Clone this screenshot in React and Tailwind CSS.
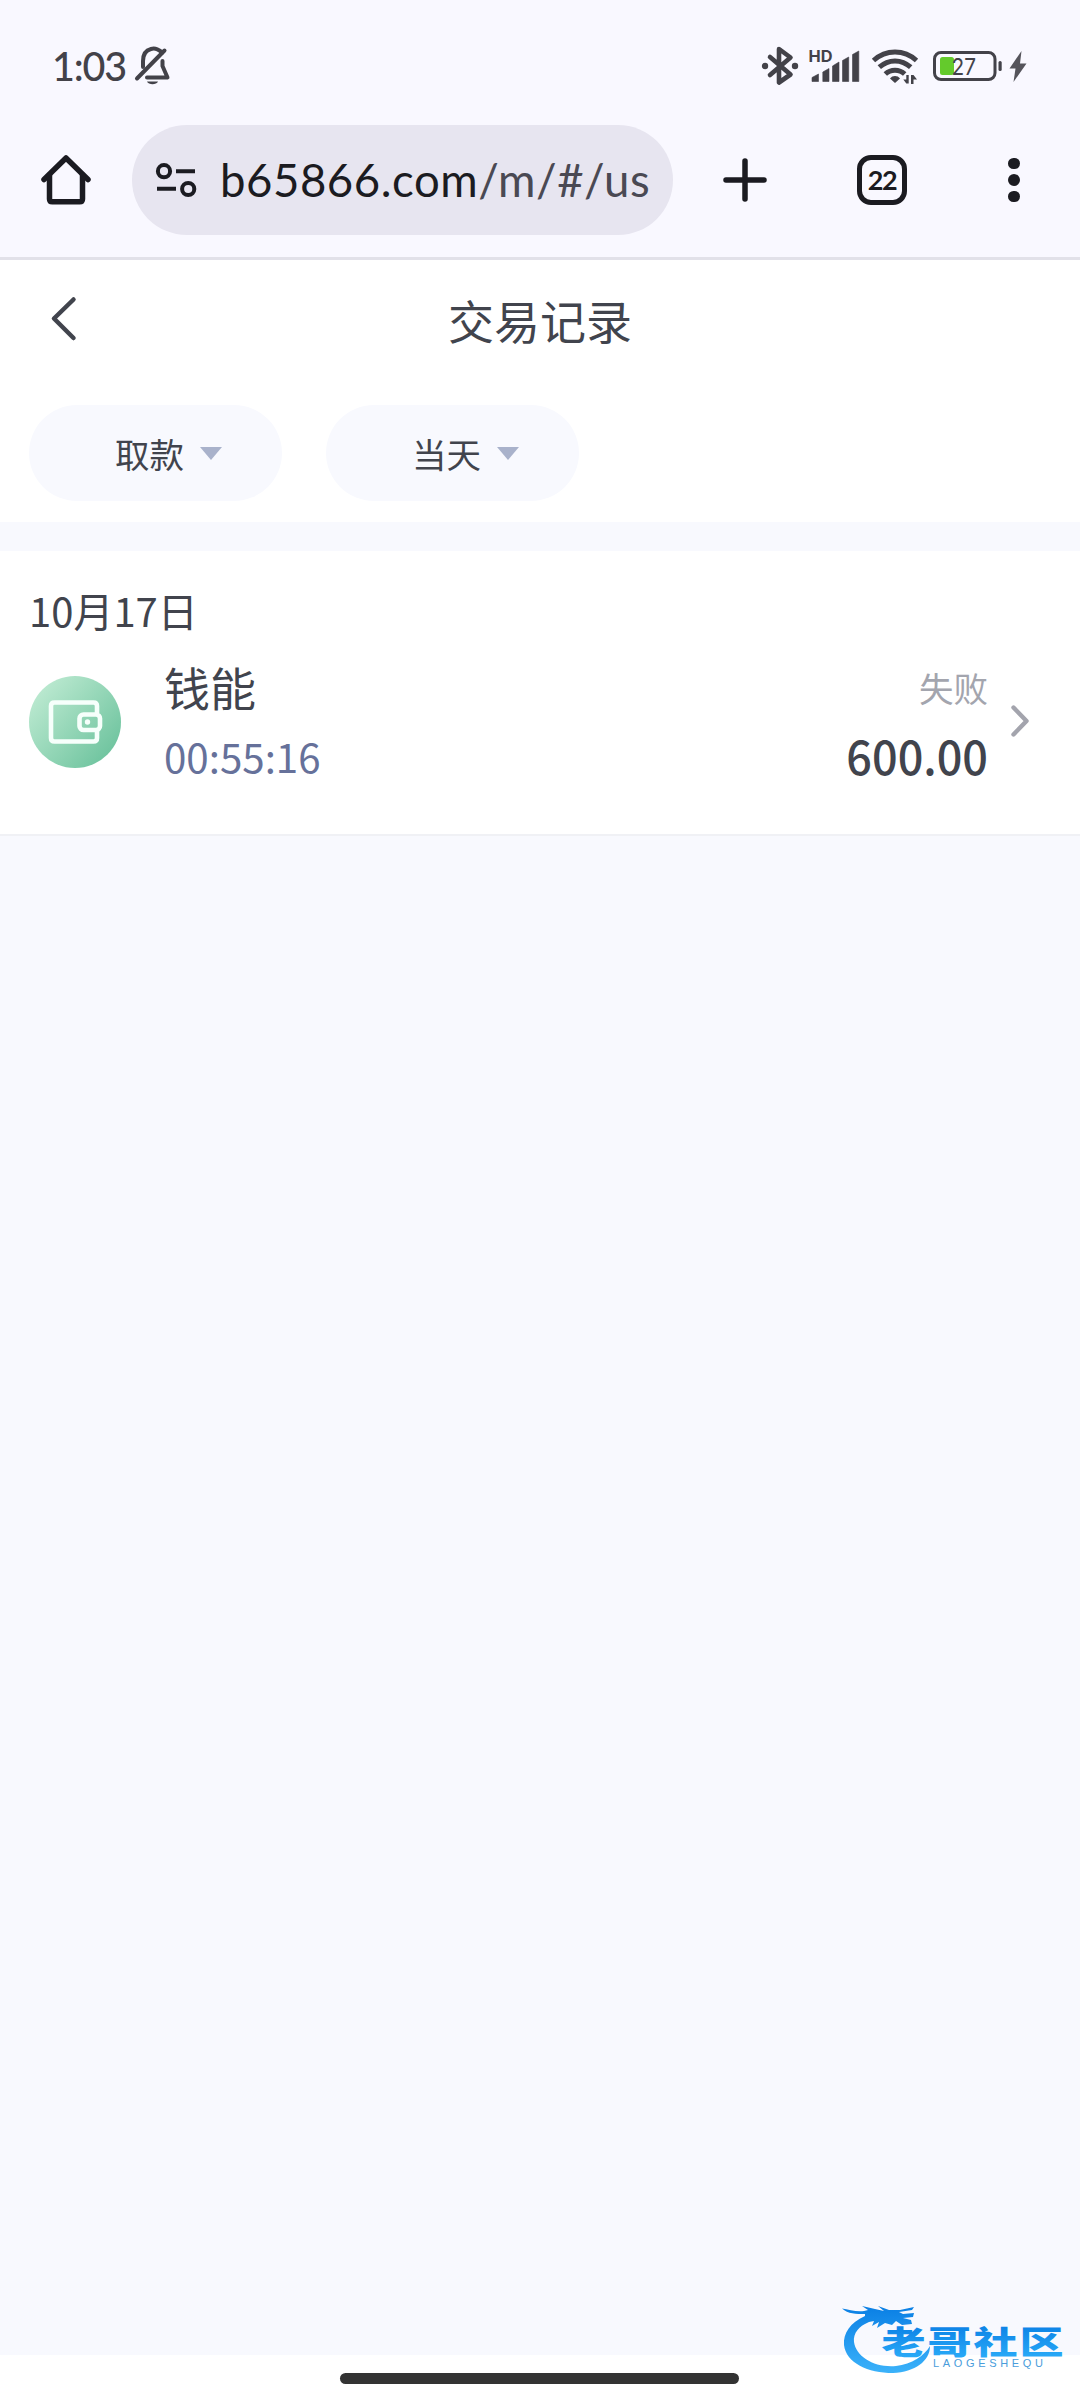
const INK = "#1b1b21";
const STATUS = "#434249";

function BellOff() {
  return (
    <svg className="ml-[5px] h-[40px] w-[38px] shrink-0" viewBox="132 46 38 40" fill="none" stroke={STATUS} strokeWidth="4" strokeLinecap="round" strokeLinejoin="round">
      <path d="M142 67V61C142 46.500 157 46 161 53" />
      <path d="M136 78.500L163.500 50.500" />
      <path d="M161.500 61V66L166.500 77.500H146" />
      <path d="M146 81.500H157C155.500 85 147.500 85 146 81.500Z" fill={STATUS} stroke="none" />
    </svg>
  );
}

function Bluetooth() {
  return (
    <svg className="h-[40px] w-[38px]" viewBox="761 46 38 40" fill="none" stroke={STATUS} strokeWidth="4.600" strokeLinejoin="round" strokeLinecap="round">
      <path d="M770 57L790.500 74.500L779 82.500V49L790.500 57.500L770 75" />
      <circle cx="765" cy="66" r="3.200" fill={STATUS} stroke="none" />
      <circle cx="795" cy="66" r="3.200" fill={STATUS} stroke="none" />
    </svg>
  );
}

function Signal() {
  return (
    <svg className="ml-[9px] h-[40px] w-[52px]" viewBox="808 46 52 40" fill={STATUS}>
      <text x="808.500" y="61.800" fontFamily="Inter" fontWeight="700" fontSize="16" textLength="24" lengthAdjust="spacingAndGlyphs">HD</text>
      <path d="M812 77.500L818.500 74V81.500H812Z M822.800 72L829 68.500V81.500H822.800Z M832.500 66L839 62V81.500H832.500Z M842.500 60.500L848.700 57V81.500H842.500Z M852.500 54.500L858.800 51V81.500H852.500Z" stroke={STATUS} strokeWidth=".6" strokeLinejoin="round" />
    </svg>
  );
}

function Wifi() {
  return (
    <svg className="ml-[11px] h-[40px] w-[48px]" viewBox="871 46 48 40" fill="none" stroke={STATUS} strokeWidth="5">
      <path d="M873.500 60.500C886 49.200 904 49.200 916.500 60.500" />
      <path d="M879.300 67.200C888.500 58.800 901.500 58.800 910.700 67.200" />
      <path d="M885.300 74C890.700 68.900 899.300 68.900 904.700 74" />
      <path d="M890 78.500C892.500 75.200 897.500 75.200 900 78.500L895 83Z" fill={STATUS} stroke="none" />
      <path d="M908.700 75V83.500H906.300L903.300 79.500H906.300V75Z M911 84V75H913.500L917 79.500H913.500V84Z" fill={STATUS} stroke="none" />
    </svg>
  );
}

function Battery() {
  return (
    <svg className="ml-[13px] h-[40px] w-[72px]" viewBox="932 46 72 40">
      <rect x="934.500" y="52.500" width="60.500" height="27" rx="6.500" fill="none" stroke={STATUS} strokeWidth="3" />
      <rect x="998.500" y="61" width="3.200" height="10" rx="1.500" fill={STATUS} />
      <rect x="940" y="57" width="14" height="18" rx="2.500" fill="#64ca2c" />
      <text x="951.500" y="75" fontFamily="Inter" fontSize="23.500" fill={STATUS} textLength="24.500" lengthAdjust="spacingAndGlyphs">27</text>
    </svg>
  );
}

function Bolt() {
  return (
    <svg className="ml-[4px] h-[40px] w-[20px]" viewBox="1008 46 20 40" fill="#55545b">
      <path d="M1021.500 51L1009.500 68.500H1015.500L1013.500 82L1026.500 63.500H1020Z" />
    </svg>
  );
}

function StatusBar() {
  return (
    <div className="flex h-[112px] items-center pt-[20px] pl-[52px]">
      <span className="w-[76px] whitespace-nowrap text-[39.500px] leading-[40px] font-medium tracking-[-1.200px] text-[#434249] font-['Lato',sans-serif]">1:03</span>
      <BellOff />
      <div className="ml-auto flex items-center pr-[52px]">
        <Bluetooth />
        <Signal />
        <Wifi />
        <Battery />
        <Bolt />
      </div>
    </div>
  );
}

function BrowserBar() {
  return (
    <div className="flex h-[148px] items-center border-b-[3px] border-[#e2e1e9] pb-[9px]">
      <svg className="ml-[40px] h-[52px] w-[52px] shrink-0" viewBox="40 154 52 52" fill="none" stroke={INK} strokeWidth="5.500" strokeLinejoin="round" strokeLinecap="round">
        <path d="M44 179.500L66 158L88 179.500" />
        <path d="M49.500 175V199Q49.500 201.800 52.300 201.800H79.700Q82.500 201.800 82.500 199V175" />
      </svg>
      <div className="ml-[40px] flex h-[110px] w-[541px] shrink-0 items-center rounded-full bg-[#e7e5f0]">
        <svg className="ml-[23px] h-[36px] w-[42px] shrink-0" viewBox="155 162 42 36" fill="none" stroke={INK} strokeWidth="4">
          <circle cx="164" cy="171.200" r="6.100" />
          <path d="M176 171.200H195M157 188.800H176" />
          <circle cx="188.200" cy="189" r="6.100" />
        </svg>
        <span className="ml-[23px] whitespace-nowrap text-[45.500px] leading-[60px] tracking-[0.550px] text-[#1b1b21] font-['Lato',sans-serif]">
          b65866.com<span className="text-[#4a4953]">/m/#/us</span>
        </span>
      </div>
      <svg className="ml-[49px] h-[46px] w-[46px] shrink-0" viewBox="0 0 46 46" stroke={INK} strokeWidth="5.500" strokeLinecap="round">
        <path d="M23 4V42M4 23H42" />
      </svg>
      <div className="ml-[89px] flex h-[50px] w-[50px] shrink-0 items-center justify-center rounded-[14px] border-[5.500px] border-[#1b1b21] pb-px text-[27px] leading-none font-bold tracking-[-1.500px] text-[#1b1b21] font-['Lato',sans-serif]">22</div>
      <div className="ml-[101px] flex flex-col gap-[5px]">
        <i className="size-[11.500px] rounded-full bg-[#1b1b21]" />
        <i className="size-[11.500px] rounded-full bg-[#1b1b21]" />
        <i className="size-[11.500px] rounded-full bg-[#1b1b21]" />
      </div>
    </div>
  );
}

function Filter({ label }) {
  return (
    <div className="flex h-[96px] w-[253px] items-center rounded-full bg-[#f8f9fe] pl-[86px]">
      <span className="text-[34.500px] leading-[40px] text-[#41444d]">{label}</span>
      <svg className="ml-[16px] h-[13px] w-[22px]" viewBox="0 0 22 13" fill="#a9b2cb">
        <path d="M0 0H22L11 13Z" />
      </svg>
    </div>
  );
}

function WalletIcon() {
  return (
    <svg className="h-[92px] w-[92px] shrink-0" viewBox="0 0 92 92" fill="none">
      <defs>
        <linearGradient id="wallet" x1=".1" y1=".15" x2=".9" y2=".85">
          <stop offset="0" stopColor="#bbe9d0" />
          <stop offset="1" stopColor="#6fc49f" />
        </linearGradient>
      </defs>
      <circle cx="46" cy="46" r="46" fill="url(#wallet)" />
      <g stroke="#f6fffb" strokeWidth="4.600" strokeLinejoin="round">
        <path d="M68 37V30Q68 26.500 64.500 26.500H25.500Q22 26.500 22 30V62Q22 65.500 25.500 65.500H64.500Q68 65.500 68 62V55" />
        <rect x="50.500" y="38.500" width="20.500" height="15.500" rx="4" />
      </g>
      <circle cx="58.500" cy="46" r="2.700" fill="#f6fffb" />
    </svg>
  );
}

function Record() {
  return (
    <div className="flex h-[206px] pl-[29px]">
      <div className="mt-[47px]">
        <WalletIcon />
      </div>
      <div className="ml-[43px] flex flex-col">
        <span className="mt-[25px] text-[46px] leading-[64px] text-[#41444d]">钱能</span>
        <span className="mt-[8px] text-[40.300px] leading-[60px] text-[#66719a]">00:55:16</span>
      </div>
      <div className="ml-auto flex flex-col items-end">
        <span className="mt-[36px] text-[34.500px] leading-[44px] text-[#a3a5ae]">失败</span>
        <span className="mt-[14px] origin-right scale-y-105 text-[45px] leading-[64px] font-medium text-[#41444d]">600.00</span>
      </div>
      <svg className="mt-[75px] mr-[50px] ml-[22px] h-[34px] w-[20px]" viewBox="0 0 20 34" fill="none" stroke="#a3a4ad" strokeWidth="4.400" strokeLinecap="round" strokeLinejoin="round">
        <path d="M3.500 3.500L16.500 17L3.500 30.500" />
      </svg>
    </div>
  );
}

function Watermark() {
  return (
    <svg className="absolute top-[2300px] left-[836px] h-[80px] w-[236px]" viewBox="836 2300 236 80">
      <defs>
        <linearGradient id="ring" x1="0" y1="0" x2="0" y2="1">
          <stop offset="0" stopColor="#0a7fe4" />
          <stop offset="1" stopColor="#3bb2fa" />
        </linearGradient>
        <linearGradient id="word" x1="0" y1="0" x2="0" y2="1">
          <stop offset=".2" stopColor="#0c82e6" />
          <stop offset="1" stopColor="#2eb0fa" />
        </linearGradient>
      </defs>
      <path fill="url(#ring)" d="M865 2316C850 2323 843 2333 844 2345C846 2363 868 2373 893 2373C915 2372 930 2361 930 2346C924 2356 912 2364 896 2366C875 2368 856 2357 854 2342C853 2333 859 2326 869 2322L874 2321L872 2326L879 2322L877 2328L885 2323L892 2325L896 2321L902 2325L912 2324L911 2320L903 2318L913 2317L914 2313L903 2314L899 2312L912 2310L914 2307L900 2310L889 2310L878 2306L884 2311L875 2309L862 2306L868 2310C860 2313 850 2310 842 2308.500C848 2314 856 2314 865 2314Z" />
      <g transform="translate(881.500 2353.500) scale(1 .73)">
        <text fontFamily="Noto Sans CJK SC" fontWeight="900" fontSize="44" textLength="182" fill="url(#word)">老哥社区</text>
      </g>
      <text x="933" y="2367" fontFamily="Liberation Sans" fontSize="11" textLength="110" fill="#4a9ddb">LAOGESHEQU</text>
    </svg>
  );
}

export default function App() {
  return (
    <div className="relative flex h-[2400px] w-[1080px] flex-col overflow-hidden bg-[#f8f9fe] font-['Noto_Sans_CJK_SC',sans-serif]">
      <header className="bg-[#f9f8ff]">
        <StatusBar />
        <BrowserBar />
      </header>
      <section className="h-[262px] bg-white">
        <div className="grid h-[145px] grid-cols-3 pt-[29px]">
          <svg className="mt-[6px] ml-[50px] h-[48px] w-[28px]" viewBox="0 0 28 48" fill="none" stroke="#41444d" strokeWidth="4.500" strokeLinecap="round" strokeLinejoin="round">
            <path d="M23.500 4.500L4 23.500L23.500 43" />
          </svg>
          <h1 className="text-center text-[46px] leading-[60px] text-[#41444d]">交易记录</h1>
        </div>
        <div className="flex gap-[44px] pl-[29px]">
          <Filter label="取款" />
          <Filter label="当天" />
        </div>
      </section>
      <section className="mt-[29px] h-[285px] border-b-2 border-[#f0f1f5] bg-white">
        <h2 className="mt-[29px] h-[49px] pl-[29px] text-[40px] leading-[60px] text-[#41444d]">10月17日</h2>
        <Record />
      </section>
      <footer className="mt-auto flex h-[45px] justify-center bg-white pt-[18px] pr-[2px]">
        <div className="h-[11px] w-[399px] rounded-full bg-[#333]" />
      </footer>
      <Watermark />
    </div>
  );
}
